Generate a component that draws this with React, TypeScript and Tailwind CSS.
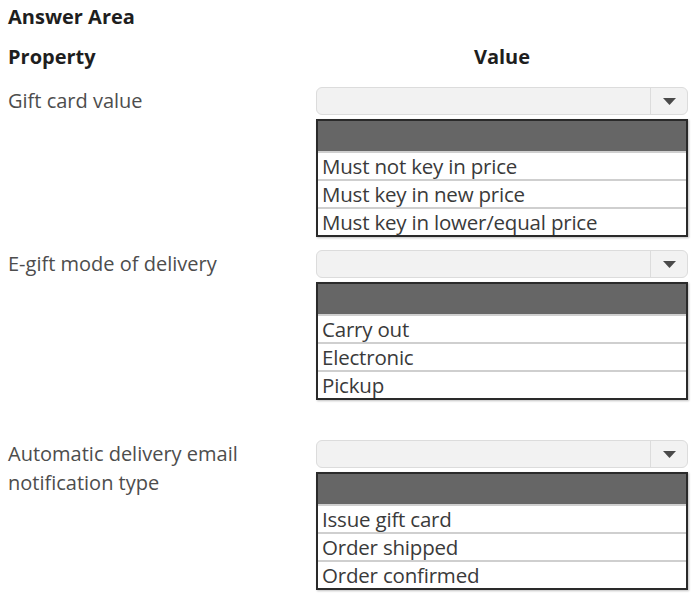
import React from "react";

type Group = {
  label: string[];
  options: string[];
  gap: string;
};

const groups: Group[] = [
  {
    label: ["Gift card value"],
    options: ["Must not key in price", "Must key in new price", "Must key in lower/equal price"],
    gap: "mt-[13px]",
  },
  {
    label: ["E-gift mode of delivery"],
    options: ["Carry out", "Electronic", "Pickup"],
    gap: "mt-[13px]",
  },
  {
    label: ["Automatic delivery email", "notification type"],
    options: ["Issue gift card", "Order shipped", "Order confirmed"],
    gap: "mt-[40px]",
  },
];

const Dropdown = ({ options }: { options: string[] }) => (
  <div className="w-[372px]">
    <div className="flex h-[28px] rounded-md border border-[#dcdcdc] bg-[#f2f2f2]">
      <div className="flex-1" />
      <div className="flex w-[37px] items-center justify-center border-l border-[#dcdcdc]">
        <svg width="13" height="7" viewBox="0 0 13 7">
          <path d="M0 0h13L6.5 7z" fill="#4a4a4a" />
        </svg>
      </div>
    </div>
    <div className="mt-[4px] border-2 border-[#2a2a2a] bg-white shadow-[1px_1px_2px_rgba(0,0,0,0.25)]">
      <div className="h-[30px] bg-[#666666]" />
      {options.map((o) => (
        <div
          key={o}
          className="h-[28px] border-t-2 border-[#cfcfcf] pl-[4px] text-[20.5px] leading-[26px] tracking-[-0.2px] text-[#3a3a3a]"
        >
          {o}
        </div>
      ))}
    </div>
  </div>
);

const App = () => (
  <div className="min-h-[601px] w-[700px] bg-white pl-2 font-['Open_Sans',sans-serif]">
    <div className="flex h-[34px] items-center text-[20px] font-bold text-[#1e1e1e]">Answer Area</div>
    <div className="mt-[6px] flex h-[34px] items-center text-[20px] font-bold text-[#1e1e1e]">
      <div className="w-[308px]">Property</div>
      <div className="w-[372px] text-center">Value</div>
    </div>
    {groups.map((g) => (
      <div key={g.label[0]} className={`${g.gap} flex`}>
        <div className="-mt-px w-[308px] text-[20px] leading-[29px] text-[#4d4d4d]">
          {g.label.map((l) => (
            <div key={l}>{l}</div>
          ))}
        </div>
        <Dropdown options={g.options} />
      </div>
    ))}
  </div>
);

export default App;
